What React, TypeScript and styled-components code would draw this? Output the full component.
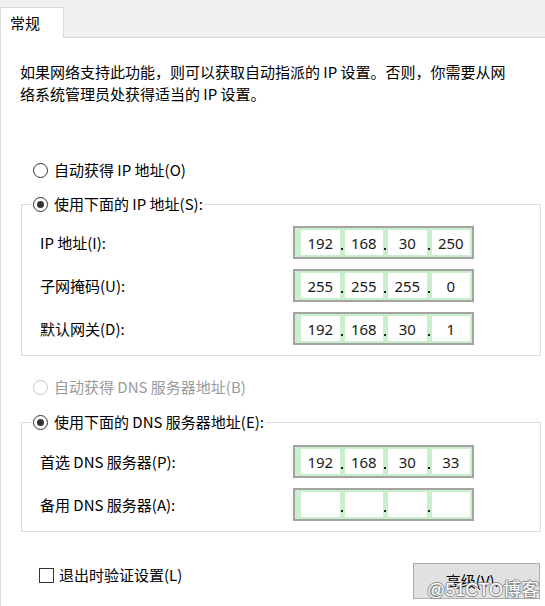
import React from "react";
import styled, { createGlobalStyle } from "styled-components";

const Global = createGlobalStyle`
  html, body { margin: 0; padding: 0; background: #ffffff; }
  body { font-family: "Noto Sans CJK SC", "Noto Sans", sans-serif; color: #000; }
`;

const Window = styled.div`
  width: 545px;
  height: 606px;
  position: relative;
  overflow: hidden;
  font-size: 15px;
  background: #fff;
`;

const TabStrip = styled.div`
  height: 37px;
  background: #f0f0f0;
  border-bottom: 1px solid #d9d9d9;
  display: flex;
  align-items: flex-end;
`;

const Tab = styled.div`
  width: 62px;
  height: 30px;
  margin-bottom: -1px;
  background: #fff;
  border: 1px solid #d9d9d9;
  border-bottom: none;
  box-sizing: content-box;
  display: flex;
  align-items: center;
  line-height: 20px;
  span { padding-left: 9px; }
`;

const Panel = styled.div`
  height: 568px;
  border-left: 1px solid #d9d9d9;
  padding: 23px 0 0 0;
  box-sizing: border-box;
  display: flex;
  flex-direction: column;
`;

const Desc = styled.p`
  margin: 0 0 0 19px;
  line-height: 22px;
  white-space: nowrap;
`;

const OptionRow = styled.label<{ $disabled?: boolean; $top: number }>`
  display: flex;
  align-items: center;
  gap: 6px;
  margin-left: 32px;
  margin-top: ${(p) => p.$top}px;
  height: 20px;
  line-height: 20px;
  color: ${(p) => (p.$disabled ? "#9a9a9a" : "#000")};
`;

const RadioDot = styled.span<{ $checked?: boolean; $disabled?: boolean }>`
  width: 13px;
  height: 13px;
  border-radius: 50%;
  border: 1px solid ${(p) => (p.$disabled ? "#c6c6c6" : "#333")};
  background: #fff;
  display: flex;
  align-items: center;
  justify-content: center;
  flex: none;
  &::after {
    content: "";
    width: 7px;
    height: 7px;
    border-radius: 50%;
    background: #333;
    display: ${(p) => (p.$checked ? "block" : "none")};
  }
`;

const Group = styled.fieldset<{ $top: number }>`
  margin: ${(p) => p.$top}px 0 0 20px;
  width: 520px;
  box-sizing: border-box;
  padding: 0;
  border: 1px solid #dcdcdc;
  min-width: 0;
`;

const Legend = styled.legend`
  margin-left: 9px;
  padding: 0 2px;
  display: flex;
  align-items: center;
  gap: 6px;
  height: 20px;
  line-height: 20px;
`;

const Rows = styled.div<{ $pt: number; $pb: number }>`
  display: grid;
  grid-template-columns: 253px 181px;
  row-gap: 10px;
  align-items: center;
  padding: ${(p) => p.$pt}px 0 ${(p) => p.$pb}px 18px;
`;

const Label = styled.span`
  line-height: 20px;
`;

const IpBox = styled.div`
  height: 33px;
  box-sizing: border-box;
  border: 2px solid #a3a3a3;
  background: #c9efcc;
  padding: 2px 2px 2px 6px;
  display: grid;
  grid-template-columns: 1fr 5px 1fr 5px 1fr 5px 1fr;
`;

const Cell = styled.span`
  background: #fff;
  display: flex;
  align-items: center;
  justify-content: center;
  font-family: "Noto Sans", "Liberation Sans", sans-serif;
  font-size: 15px;
  color: #1a1a1a;
`;

const Dot = styled.span`
  position: relative;
  &::after {
    content: "";
    position: absolute;
    left: 1px;
    bottom: 5px;
    width: 2px;
    height: 2px;
    background: #222;
  }
`;

const Footer = styled.div`
  display: flex;
  justify-content: space-between;
  align-items: flex-start;
  margin-top: 31px;
  padding-left: 38px;
  padding-right: 5px;
`;

const CheckRow = styled.label`
  display: flex;
  align-items: center;
  gap: 5px;
  margin-top: 2px;
  line-height: 20px;
`;

const CheckBox = styled.span`
  width: 13px;
  height: 13px;
  border: 1px solid #333;
  background: #fff;
  flex: none;
`;

const Button = styled.div`
  width: 127px;
  height: 36px;
  box-sizing: border-box;
  background: #e1e1e1;
  border: 1px solid #adadad;
  display: flex;
  align-items: center;
  justify-content: center;
  line-height: 20px;
`;

const Watermark = styled.div`
  position: absolute;
  right: 6px;
  bottom: 5px;
  font-family: "Liberation Sans", "Noto Sans CJK SC", sans-serif;
  font-size: 18px;
  line-height: 22px;
  color: #fff;
  text-shadow: -1px 0 #8a8a8a, 1px 0 #8a8a8a, 0 -1px #8a8a8a, 0 1px #8a8a8a;
`;

type Ip = [string, string, string, string];

const IpField = ({ v }: { v: Ip }) => (
  <IpBox>
    <Cell>{v[0]}</Cell>
    <Dot />
    <Cell>{v[1]}</Cell>
    <Dot />
    <Cell>{v[2]}</Cell>
    <Dot />
    <Cell>{v[3]}</Cell>
  </IpBox>
);

export default function App() {
  return (
    <>
      <Global />
      <Window>
        <TabStrip>
          <Tab>
            <span>常规</span>
          </Tab>
        </TabStrip>
        <Panel>
          <Desc>
            如果网络支持此功能，则可以获取自动指派的 IP 设置。否则，你需要从网
            <br />
            络系统管理员处获得适当的 IP 设置。
          </Desc>

          <OptionRow $top={55}>
            <RadioDot />
            自动获得 IP 地址(O)
          </OptionRow>

          <Group $top={14}>
            <Legend>
              <RadioDot $checked />
              使用下面的 IP 地址(S):
            </Legend>
            <Rows $pt={12} $pb={10}>
              <Label>IP 地址(I):</Label>
              <IpField v={["192", "168", "30", "250"]} />
              <Label>子网掩码(U):</Label>
              <IpField v={["255", "255", "255", "0"]} />
              <Label>默认网关(D):</Label>
              <IpField v={["192", "168", "30", "1"]} />
            </Rows>
          </Group>

          <OptionRow $top={21} $disabled>
            <RadioDot $disabled />
            自动获得 DNS 服务器地址(B)
          </OptionRow>

          <Group $top={15}>
            <Legend>
              <RadioDot $checked />
              使用下面的 DNS 服务器地址(E):
            </Legend>
            <Rows $pt={13} $pb={10}>
              <Label>首选 DNS 服务器(P):</Label>
              <IpField v={["192", "168", "30", "33"]} />
              <Label>备用 DNS 服务器(A):</Label>
              <IpField v={["", "", "", ""]} />
            </Rows>
          </Group>

          <Footer>
            <CheckRow>
              <CheckBox />
              退出时验证设置(L)
            </CheckRow>
            <Button>高级(V)...</Button>
          </Footer>
        </Panel>
        <Watermark>@51CTO博客</Watermark>
      </Window>
    </>
  );
}
